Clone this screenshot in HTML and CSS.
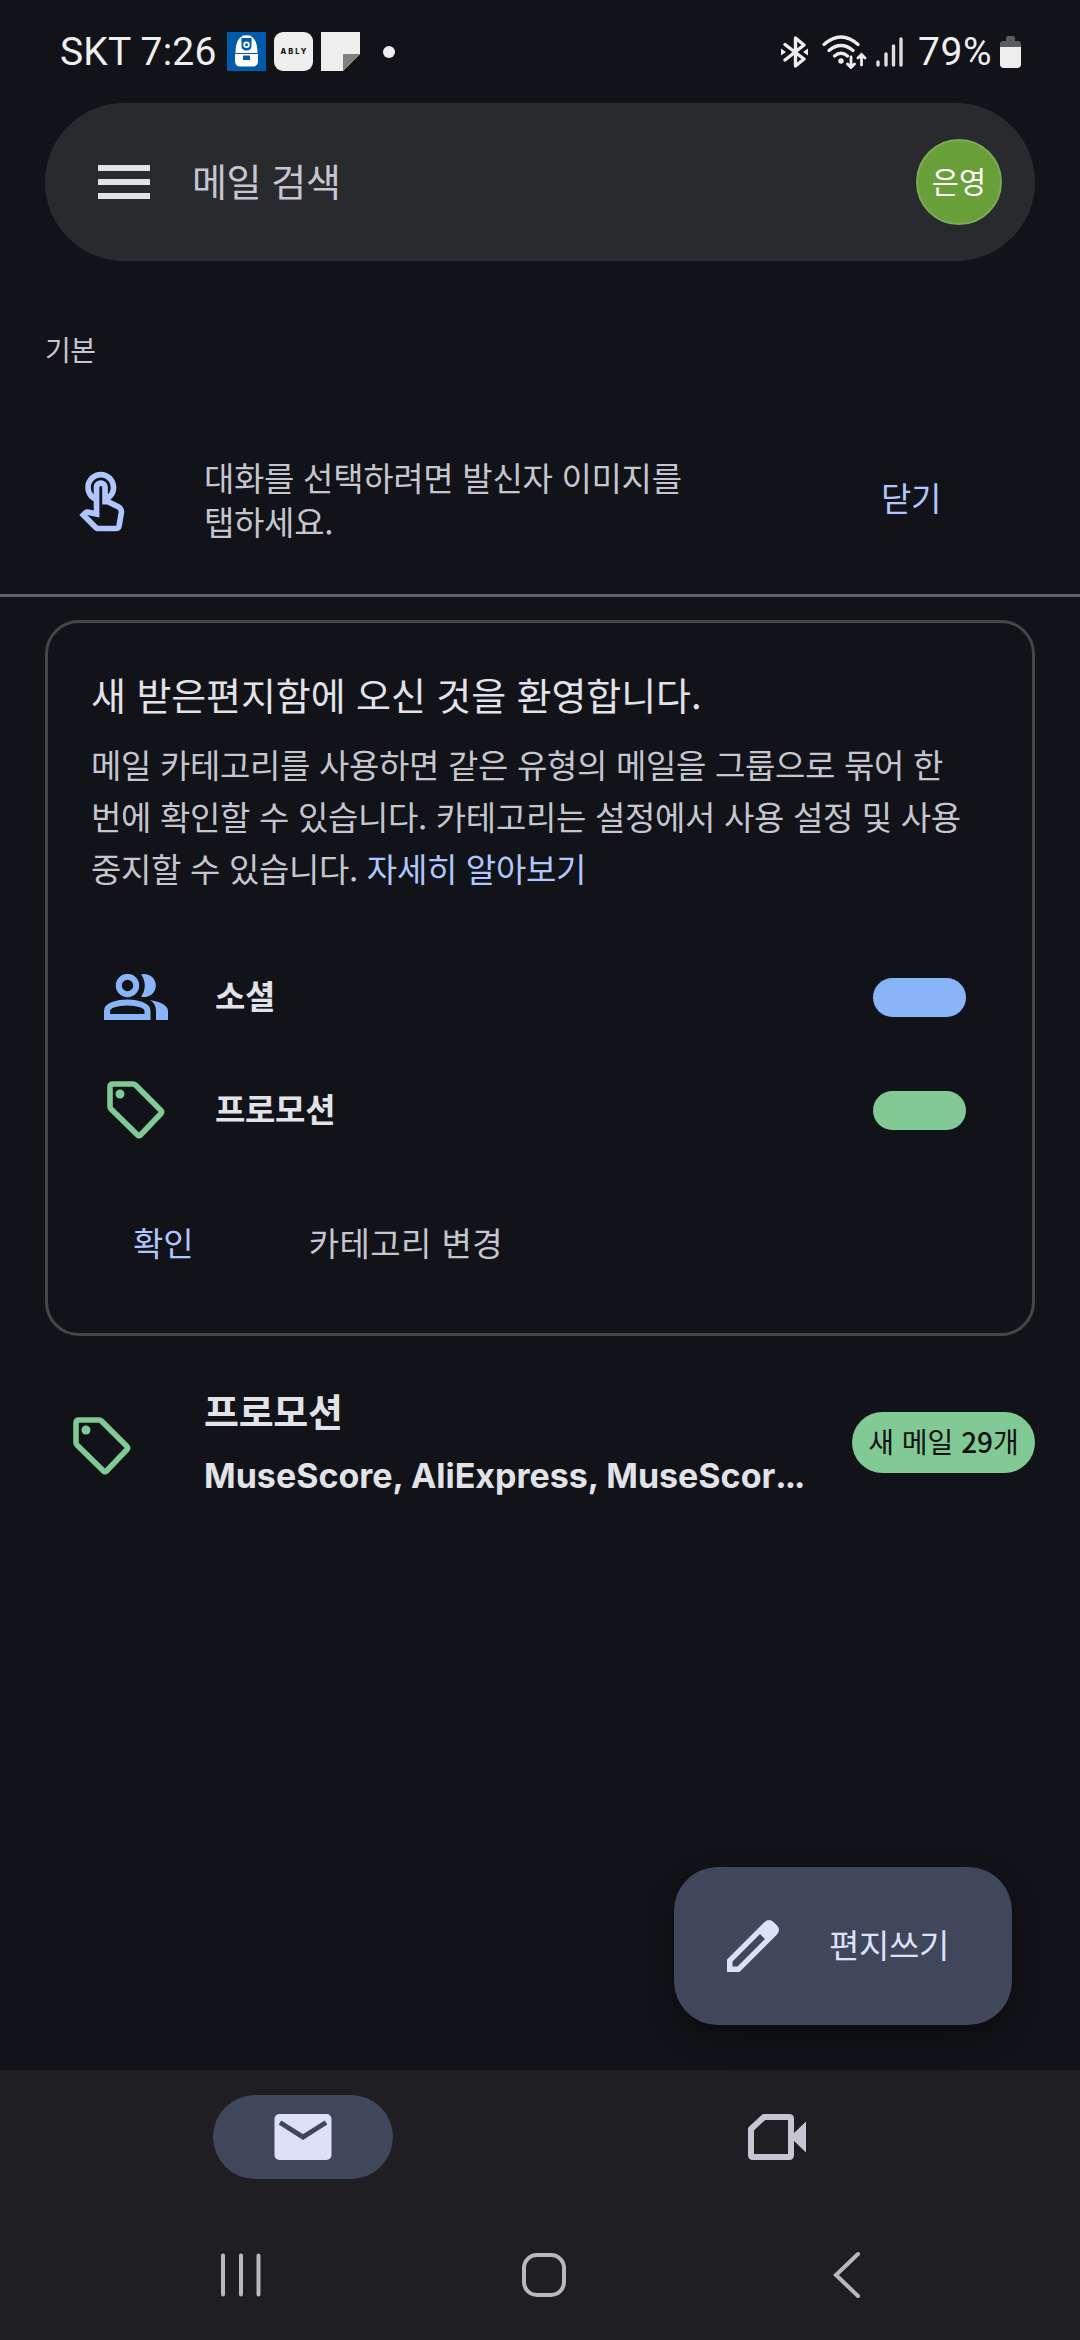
FILE: index.html
```html
<!DOCTYPE html>
<html lang="ko">
<head>
<meta charset="utf-8">
<title>메일</title>
<link rel="stylesheet" href="styles.css">
</head>
<body>
<div class="screen">
  <header class="status">
    <div class="status-left">
      <span class="clock">SKT 7:26</span>
      <svg class="app" viewBox="0 0 39 39"><path fill="#005bab" d="M0 0h39v39H0z"/><path fill="#fff" d="M8.500 21C8.500 12 11 6 15 4.500l4.500-1 4.500 1c4 1.500 6.500 7.500 6.500 16.500z"/><path fill="#fff" d="M8 22h23v7q0 5.500-5.500 5.500h-12Q8 34.500 8 29z"/><path fill="#005bab" d="M14.500 5.500h10v8q0 5-5 5t-5-5z"/><path fill="#fff" d="M15.500 3.500h8l1 2.500h-10z"/><circle cx="19.500" cy="12.800" r="3.300" fill="#fff"/><circle cx="19.500" cy="12.800" r="1.500" fill="#005bab"/><path fill="#005bab" d="M16 23.500h7v4.500h-7z"/></svg>
      <span class="ably">ABLY</span>
      <svg class="app" viewBox="0 0 39 39"><path fill="#eee" d="M0 0h39v22L22 39H0z"/><path fill="#808080" d="M22 22h17L22 39z"/></svg>
      <span class="dot"></span>
    </div>
    <div class="status-right">
      <svg class="bt" viewBox="0 0 27 32"><path d="M4 8.500 23 23l-8.500 7V2L23 9 4 24" fill="none" stroke="#eee" stroke-width="3.400" stroke-linejoin="round" stroke-linecap="round"/><path fill="#eee" d="M0 12.500 5 16l-5 3.500zM27 12.500 22 16l5 3.500z"/></svg>
      <svg class="wifi" viewBox="0 0 45 34"><g fill="none" stroke="#eee" stroke-width="3.200" stroke-linecap="round"><path d="M2 9.500q17-15 34 0M7 15.500q12-10 24 0M12.500 21q6.500-5.500 13 0"/><path d="M29 22v10M25.500 29l3.500 3.500L32.500 29M39.500 30V20M36 23l3.500-3.500L43 23" stroke-width="2.800"/></g><circle cx="19" cy="26" r="2.700" fill="#eee"/></svg>
      <svg class="signal" viewBox="0 0 28 30"><path d="M2 25v3M10 17v11M17.500 9v19M25 2v26" stroke="#ddd" stroke-width="3.400" stroke-linecap="round"/></svg>
      <span class="percent">79%</span>
      <svg class="battery" viewBox="0 0 21 32"><path fill="#5b5c5f" d="M6 2q0-2 2-2h5q2 0 2 2v3h3q3 0 3 3v4H0V8q0-3 3-3h3z"/><path fill="#eee" d="M0 11h21v17q0 4-4 4H4q-4 0-4-4z"/></svg>
    </div>
  </header>

  <div class="search">
    <span class="menu"><i></i><i></i><i></i></span>
    <span class="search-text">메일 검색</span>
    <span class="avatar">은영</span>
  </div>

  <div class="section">기본</div>

  <div class="tip">
    <svg class="touch" viewBox="0 0 24 24"><path fill="#b0c6ff" d="M18.190 12.440l-3.240-1.620c1.290-1 2.120-2.560 2.120-4.320 0-3.030-2.470-5.500-5.500-5.500s-5.500 2.470-5.500 5.500c0 2.130 1.220 3.980 3 4.890v3.260c-2.150-.46-2.020-.44-2.260-.44-.53 0-1.030.21-1.410.59L4 16.220l5.090 5.090c.43.440 1.030.690 1.650.690h6.300c.980 0 1.810-.7 1.970-1.670l.8-4.710c.22-1.300-.43-2.580-1.620-3.180zm-.350 2.850l-.8 4.710h-6.300c-.090 0-.17-.040-.24-.1l-3.680-3.680 4.250.89V6.500c0-.28.220-.5.500-.5s.5.220.5.500v6h1.760l3.460 1.730c.4.200.62.630.55 1.060zM8.070 6.500c0-1.930 1.570-3.500 3.500-3.500s3.500 1.570 3.500 3.500c0 .95-.38 1.810-1 2.440V6.500c0-1.380-1.120-2.500-2.500-2.500s-2.500 1.120-2.500 2.500v2.440c-.620-.630-1-1.490-1-2.440z"/></svg>
    <p class="tip-text">대화를 선택하려면 발신자 이미지를<br>탭하세요.</p>
    <span class="tip-close">닫기</span>
  </div>

  <section class="card">
    <h1 class="card-title">새 받은편지함에 오신 것을 환영합니다.</h1>
    <p class="card-body">메일 카테고리를 사용하면 같은 유형의 메일을 그룹으로 묶어 한<br>번에 확인할 수 있습니다. 카테고리는 설정에서 사용 설정 및 사용<br>중지할 수 있습니다. <a class="link">자세히 알아보기</a></p>
    <div class="cat">
      <svg class="people" viewBox="0 0 64 46"><g fill="none" stroke="#8ab4f8" stroke-width="6"><circle cx="23.500" cy="11.500" r="8.700"/><path d="M3 43h40.500v-6c0-6-11-8.500-20.250-8.500S3 31 3 37z"/></g><path fill="#8ab4f8" d="M37 .6a11.500 11.500 0 1 1 0 22c5-6 5-16 0-22zM46 26c9 1.500 18 5 18 11v9H52v-9c0-5-2-8.500-6-11z"/></svg>
      <span class="cat-name">소셜</span><span class="pill blue"></span>
    </div>
    <div class="cat">
      <svg class="tag" viewBox="0 0 58 58"><path d="M6 3h20q1.500 0 2.500 1l25.500 25.500q1.500 1.500 0 3L33.500 54q-1.500 1.500-3 0L4 28q-1-1-1-2.500V6q0-3 3-3z" fill="none" stroke="#81c995" stroke-width="5.600"/><circle cx="13" cy="13" r="4.500" fill="#81c995"/></svg>
      <span class="cat-name">프로모션</span><span class="pill green"></span>
    </div>
    <div class="actions"><span class="ok">확인</span><span class="change">카테고리 변경</span></div>
  </section>

  <div class="promo">
    <svg class="tag" viewBox="0 0 58 58"><path d="M6 3h20q1.500 0 2.500 1l25.500 25.500q1.500 1.500 0 3L33.500 54q-1.500 1.500-3 0L4 28q-1-1-1-2.500V6q0-3 3-3z" fill="none" stroke="#81c995" stroke-width="5.600"/><circle cx="13" cy="13" r="4.500" fill="#81c995"/></svg>
    <div class="promo-text">
      <div class="promo-title">프로모션</div>
      <div class="promo-senders">MuseScore, AliExpress, MuseScor<span class="dots">...</span></div>
    </div>
    <span class="badge">새 메일 <b>29</b>개</span>
  </div>

  <div class="fab">
    <svg class="pencil" viewBox="0 0 52 52"><path fill="#dce1f9" fill-rule="evenodd" d="M0 52V39.500L37.500 2q4.500-4 9 0l3.500 3.500q4 4.500 0 9L12.500 52zM5.500 46.500h5L38 19l-5-5L5.500 41.500z"/></svg>
    <span class="fab-text">편지쓰기</span>
  </div>

  <footer class="bottom">
    <nav class="tabs">
      <span class="tab active"><svg viewBox="0 0 57 46"><rect width="57" height="46" rx="5" fill="#dce1f9"/><path d="M5.500 8.500 28.500 23 51.500 8.500" fill="none" stroke="#41475a" stroke-width="5"/></svg></span>
      <span class="tab"><svg viewBox="0 0 58 46"><path d="M16 3h25q2 0 2 2v36q0 2-2 2H5q-2 0-2-2V15z" fill="none" stroke="#c5c6d0" stroke-width="6" stroke-linejoin="round"/><path fill="#c5c6d0" d="M58 7.500v31L44 25v-4z"/></svg></span>
    </nav>
    <div class="system">
      <svg viewBox="0 0 48 48"><path d="M6 4.500v39M24 4.500v39M41.500 4.500v39" stroke="#b9b9b9" stroke-width="4" stroke-linecap="round"/></svg>
      <svg viewBox="0 0 48 48"><rect x="4" y="4" width="40" height="40" rx="13" fill="none" stroke="#b9b9b9" stroke-width="4"/></svg>
      <svg viewBox="0 0 48 48"><path d="M35 3 13 24l22 21" fill="none" stroke="#b9b9b9" stroke-width="4" stroke-linecap="round"/></svg>
    </div>
  </footer>
</div>
</body>
</html>
```

FILE: styles.css
```css
* { box-sizing: border-box; margin: 0; padding: 0; }
body { background: #111318; }
svg { display: block; flex: none; }
.screen {
  width: 1080px; height: 2340px; overflow: hidden;
  display: flex; flex-direction: column; position: relative;
  background: #111318; color: #c5c6d0;
  font-family: "Noto Sans CJK KR", sans-serif;
  font-size: 33px;
}

/* status bar */
.status {
  height: 103px; padding: 0 59px 0 60px;
  display: flex; justify-content: space-between; align-items: center;
  color: #eee; font-family: Roboto, sans-serif; font-size: 39px; font-weight: 370;
}
.status-left, .status-right { display: flex; align-items: center; height: 39px; }
.clock { width: 167px; white-space: nowrap; letter-spacing: .2px; }
.app { width: 39px; height: 39px; }
.ably {
  width: 39px; height: 39px; margin: 0 8px; border-radius: 9px; background: #eee;
  color: #111; font: 800 7.5px/39px Inter, sans-serif; letter-spacing: 2px; text-align: center; text-indent: 2px;
}
.dot { width: 12px; height: 12px; margin-left: 23px; border-radius: 50%; background: #eee; }
.bt { width: 27px; height: 32px; margin-right: 14px; }
.wifi { width: 45px; height: 34px; margin-right: 9px; }
.signal { width: 28px; height: 30px; margin-right: 14px; }
.percent { width: 82px; white-space: nowrap; letter-spacing: .6px; }
.battery { width: 21px; height: 32px; }

/* search bar */
.search {
  flex: none; height: 158px; margin: 0 45px; padding: 0 33px 0 53px;
  border-radius: 79px; background: #282a2d;
  display: flex; align-items: center;
}
.menu { width: 52px; height: 34px; margin-right: 42px; display: flex; flex-direction: column; justify-content: space-between; }
.menu i { height: 6px; background: #e2e2e9; }
.search-text { font-size: 38px; letter-spacing: -.4px; flex: 1; padding-bottom: 6px; }
.avatar {
  width: 86px; height: 86px; border-radius: 50%; border: 2px solid #7bab55;
  background: #689f38; color: #fff; font-size: 29.5px; line-height: 79px; text-align: center;
}

.section { flex: none; height: 145px; padding: 68px 45px 0; font-size: 28px; line-height: 40px; letter-spacing: -.4px; }

/* selection tip */
.tip {
  flex: none; height: 191px; border-bottom: 3px solid #5f6368;
  display: flex; align-items: center; padding: 0 139px 0 68px;
}
.touch { width: 68px; height: 68px; margin: 6px 68px 0 0; }
.tip-text { flex: 1; line-height: 44px; letter-spacing: -.3px; padding-bottom: 2px; }
.tip-close { color: #b0c6ff; padding-bottom: 6px; letter-spacing: -.4px; }

/* category card */
.card {
  flex: none; height: 716px; margin: 23px 45px 0; padding: 45px 40px 0 43px;
  border: 3px solid #444746; border-radius: 34px;
}
.card-title { font-size: 38px; font-weight: 400; line-height: 52px; color: #e2e2e9; letter-spacing: -.1px; }
.card-body { margin-top: 18px; line-height: 52px; letter-spacing: -.33px; white-space: nowrap; }
.link { color: #b0c6ff; }
.cat { height: 113px; display: flex; align-items: center; padding-right: 26px; }
.card-body + .cat { margin-top: 46px; }
.people { width: 64px; height: 46px; margin: 0 47px 0 13px; }
.tag { width: 58px; height: 58px; }
.cat .tag { margin: 0 50px 0 16px; }
.cat-name { flex: 1; font-weight: 700; color: #e2e2e9; padding-bottom: 3px; letter-spacing: -.3px; }
.pill { width: 93px; height: 39px; border-radius: 20px; margin-top: 2px; }
.blue { background: #8ab4f8; }
.green { background: #81c995; }
.actions { display: flex; gap: 115px; margin: 52px 0 0 42px; line-height: 48px; }
.ok { color: #b0c6ff; }
.change { letter-spacing: .4px; }

/* promotions row */
.promo { flex: none; height: 212px; padding: 0 45px 0 73px; display: flex; align-items: center; }
.promo > .tag { margin-top: 8px; }
.promo-text { flex: 1; margin-left: 73px; color: #e2e2e9; font-weight: 700; }
.promo-title { font-size: 38px; line-height: 60px; letter-spacing: -.3px; }
.promo-senders { font: 650 34px/64px Inter, sans-serif; padding-top: 4px; margin-bottom: -4px; white-space: nowrap; letter-spacing: 0; }
.dots { letter-spacing: -2px; }
.badge {
  width: 183px; height: 61px; border-radius: 31px; background: #81c995; margin-top: 1px;
  color: #111; font-size: 28px; line-height: 59px; text-align: center; white-space: nowrap;
}
.badge b { font-weight: 500; }

/* floating compose button */
.fab {
  position: absolute; left: 674px; top: 1867px; width: 338px; height: 158px;
  padding-left: 53px; display: flex; align-items: center; gap: 50px;
  border-radius: 44px; background: #41475a; color: #dce1f9;
  box-shadow: 0 12px 28px rgba(0, 0, 0, .35);
}
.pencil { width: 52px; height: 52px; }
.fab-text { padding-bottom: 4px; letter-spacing: -.4px; }

/* bottom navigation */
.bottom { margin-top: auto; height: 270px; background: #1f1e23; }
.tabs { display: flex; padding-top: 25px; height: 140px; }
.tab { height: 84px; width: 180px; margin-left: 213px; display: flex; align-items: center; justify-content: center; border-radius: 42px; }
.tab svg { width: 58px; height: 46px; }
.tab + .tab { margin-left: 294px; }
.active { background: #41475a; }
.system { display: flex; justify-content: space-between; padding: 41px 209px 0 217px; }
.system svg { width: 48px; height: 48px; }
```
